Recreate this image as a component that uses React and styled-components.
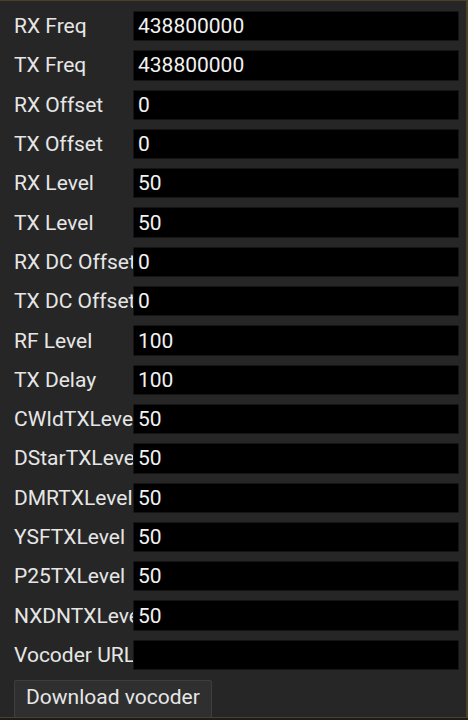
import React from "react";
import styled, { createGlobalStyle } from "styled-components";

const Global = createGlobalStyle`
  html, body { margin: 0; padding: 0; background: #1c1c1c; }
  body { font-family: Roboto, "Noto Sans", sans-serif; }
`;

const Panel = styled.div`
  box-sizing: border-box;
  width: 468px;
  height: 718px;
  overflow: hidden;
  background: #262626;
  border-top: 1px solid #4a4128;
  border-right: 2px solid #4a4128;
  border-bottom: 1px solid #4a4128;
  padding: 10px 7px 0 14px;
  display: flex;
  flex-direction: column;
  gap: 9px;
`;

const Row = styled.div`
  display: grid;
  grid-template-columns: 119px 1fr;
  align-items: center;
  height: 30.3px;
  flex: none;
`;

const Label = styled.span`
  color: #e6e6e6;
  font-size: 21px;
  white-space: nowrap;
  overflow: hidden;
`;

const Field = styled.div`
  box-sizing: border-box;
  height: 100%;
  background: #000;
  border: 1px solid #151515;
  border-radius: 1px;
  color: #f2f2f2;
  font-size: 21px;
  padding: 0 4px;
  display: flex;
  align-items: center;
`;

const Button = styled.button`
  align-self: flex-start;
  flex: none;
  margin-top: 1px;
  box-sizing: border-box;
  height: 40px;
  padding: 0 11px 6px;
  background: #2f2f2f;
  border: 1px solid #3e3e3e;
  border-radius: 2px;
  color: #e6e6e6;
  font-family: Roboto, sans-serif;
  font-size: 21px;
`;

const rows = [
  ["RX Freq", "438800000"],
  ["TX Freq", "438800000"],
  ["RX Offset", "0"],
  ["TX Offset", "0"],
  ["RX Level", "50"],
  ["TX Level", "50"],
  ["RX DC Offset", "0"],
  ["TX DC Offset", "0"],
  ["RF Level", "100"],
  ["TX Delay", "100"],
  ["CWIdTXLevel", "50"],
  ["DStarTXLevel", "50"],
  ["DMRTXLevel", "50"],
  ["YSFTXLevel", "50"],
  ["P25TXLevel", "50"],
  ["NXDNTXLevel", "50"],
  ["Vocoder URL", ""],
];

export default function App() {
  return (
    <>
      <Global />
      <Panel>
        {rows.map(([l, v]) => (
          <Row key={l}>
            <Label>{l}</Label>
            <Field>{v}</Field>
          </Row>
        ))}
        <Button>Download vocoder</Button>
      </Panel>
    </>
  );
}
